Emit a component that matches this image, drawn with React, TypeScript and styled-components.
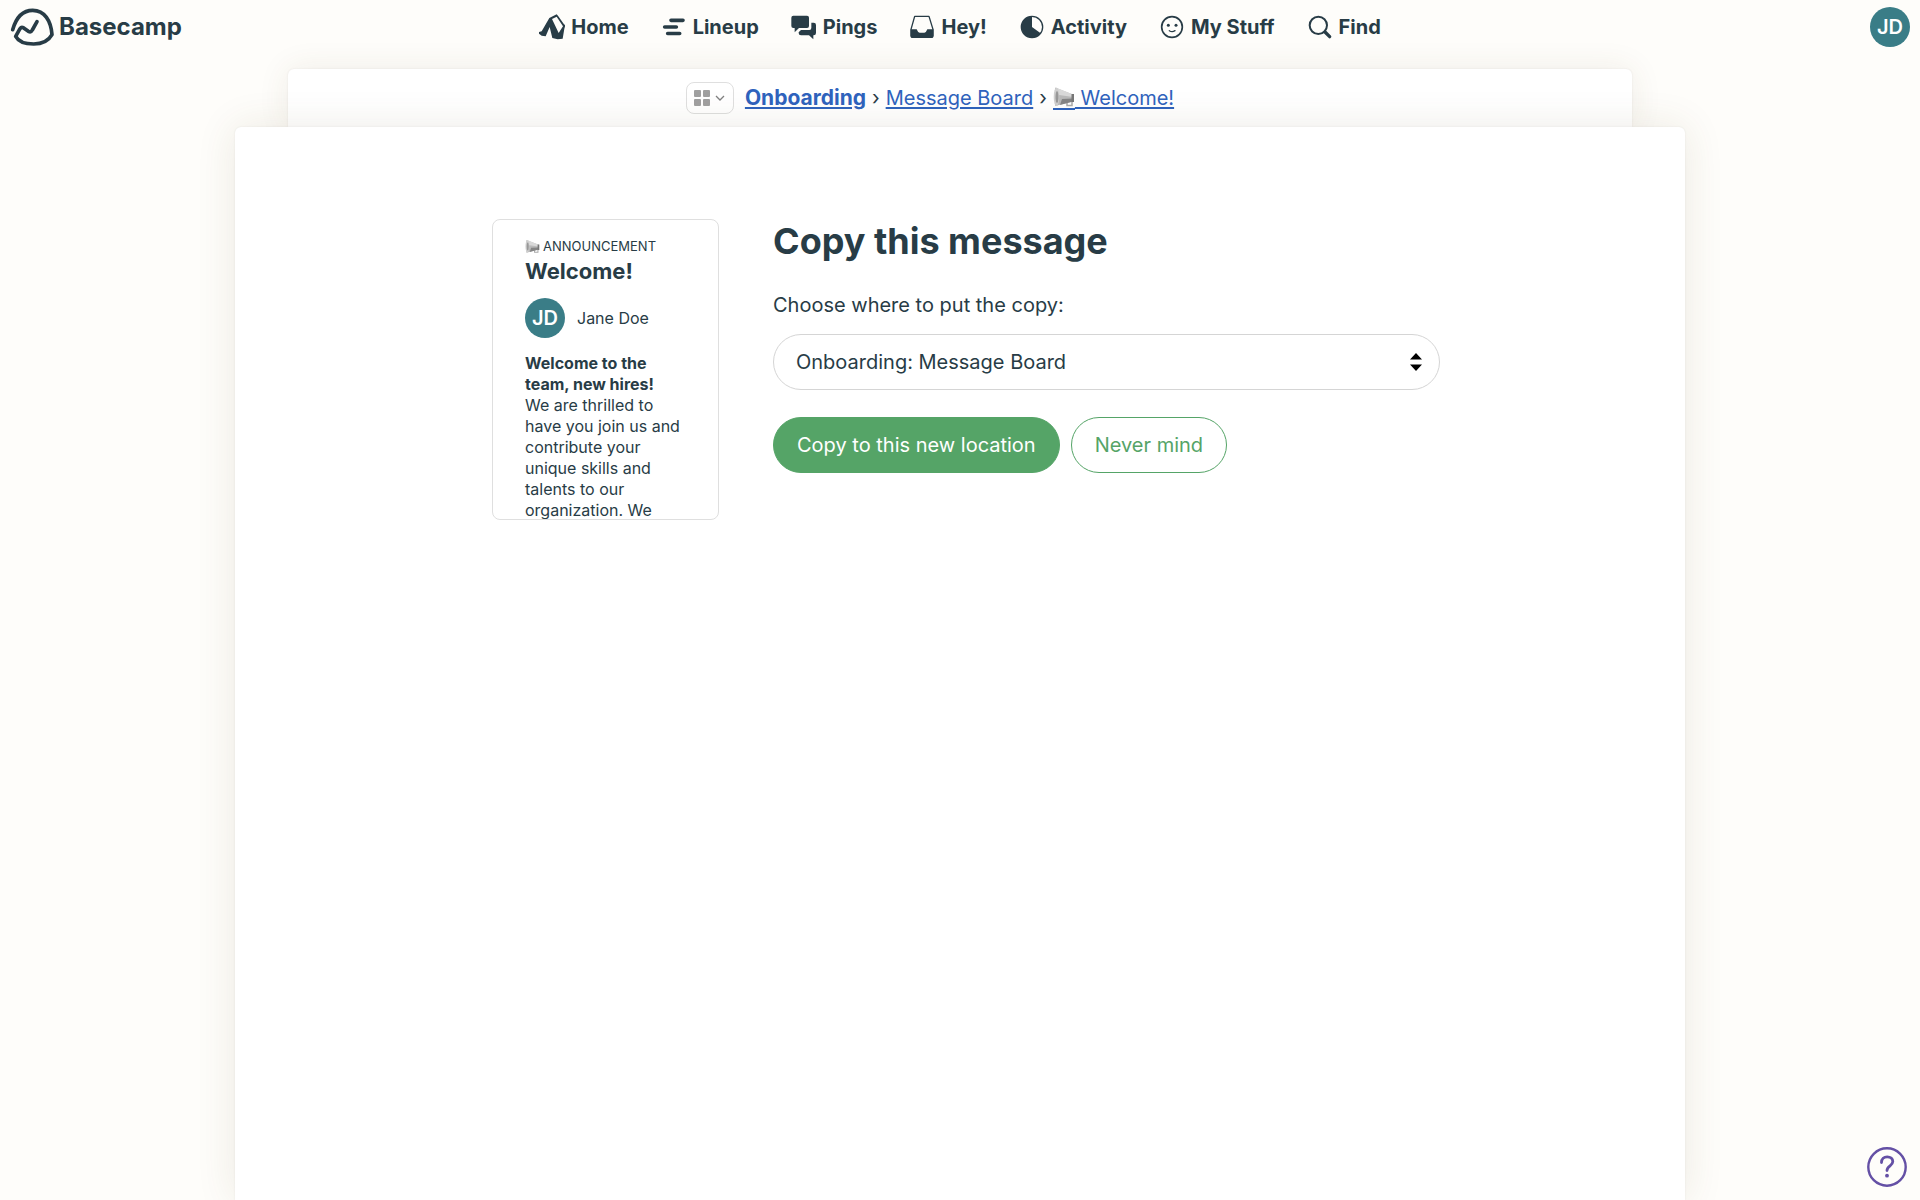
import React from "react";
import styled, { createGlobalStyle } from "styled-components";

const ink = "#283c46";
const teal = "#3a7d87";
const green = "#55a467";
const blue = "#2f63bd";

const GlobalStyle = createGlobalStyle`
  *, *::before, *::after { box-sizing: border-box; }
  html { height: 100%; }
  body {
    margin: 0;
    background: #fefdfa;
    color: ${ink};
    font-family: Inter, "Liberation Sans", sans-serif;
    font-size: 20px;
    line-height: 32px;
  }
`;

const Page = styled.div`
  display: flex;
  flex-direction: column;
  min-height: 100vh;
  overflow: hidden;
`;

const TopBar = styled.header`
  display: grid;
  grid-template-columns: 1fr auto 1fr;
  align-items: center;
  height: 53px;
  padding: 0 10px;
`;

const Brand = styled.a`
  display: flex;
  align-items: center;
  justify-self: start;
  gap: 5px;
  color: ${ink};
  font-size: 24px;
  font-weight: 700;
  text-decoration: none;
`;

const Nav = styled.nav`
  display: flex;
  gap: 32px;
`;

const NavLink = styled.a`
  display: flex;
  align-items: center;
  gap: 6px;
  color: ${ink};
  font-size: 20px;
  font-weight: 700;
  text-decoration: none;
`;

const Avatar = styled.span`
  display: inline-flex;
  flex: none;
  align-items: center;
  justify-content: center;
  width: 40px;
  height: 40px;
  border-radius: 50%;
  background: ${teal};
  color: #fff;
  font-size: 20px;
  font-weight: 600;
`;

const AccountButton = styled.button`
  justify-self: end;
  padding: 0;
  border: 0;
  border-radius: 50%;
  background: none;
  font-family: inherit;
  line-height: 0;
  cursor: pointer;
`;

const Main = styled.main`
  display: flex;
  flex: 1;
  flex-direction: column;
  align-items: center;
  padding-top: 16px;
`;

const BackSheet = styled.div`
  display: flex;
  align-items: center;
  justify-content: center;
  gap: 11px;
  width: 70%;
  height: 58px;
  border-radius: 6px 6px 0 0;
  background: #fff;
  box-shadow: 0 0 32px rgba(90, 70, 30, 0.09), 0 0 2px rgba(60, 60, 60, 0.1);
`;

const ToolsButton = styled.button`
  display: flex;
  align-items: center;
  justify-content: center;
  gap: 4px;
  width: 48px;
  height: 32px;
  padding: 0;
  border: 1px solid #dfdfdf;
  border-radius: 8px;
  background: #fff;
  cursor: pointer;
`;

const Crumbs = styled.nav`
  display: flex;
  gap: 6px;
  margin-right: 60px;
`;

const Crumb = styled.a<{ $strong?: boolean }>`
  color: ${blue};
  font-size: ${(p) => (p.$strong ? 21 : 20)}px;
  font-weight: ${(p) => (p.$strong ? 700 : 400)};
  text-decoration: underline;
  text-decoration-thickness: 2px;
  text-underline-offset: 2px;
`;

const CrumbIcon = styled.span`
  display: inline-block;
  height: 24px;
  border-bottom: 2px solid ${blue};
  line-height: 0;
  vertical-align: -3px;
`;

const Sheet = styled.section`
  display: flex;
  flex: 1;
  justify-content: center;
  position: relative;
  width: 1450px;
  max-width: 92%;
  padding-top: 92px;
  border-radius: 6px 6px 0 0;
  background: #fff;
  box-shadow: 0 0 40px rgba(90, 70, 30, 0.11), 0 0 2px rgba(60, 60, 60, 0.1);
`;

const Columns = styled.div`
  display: flex;
  align-items: flex-start;
  gap: 54px;
  width: 100%;
  max-width: 948px;
  margin-left: 12px;
`;

const Preview = styled.article`
  flex: none;
  width: 227px;
  height: 301px;
  padding: 17px 32px 0;
  border: 1px solid #dfdfdf;
  border-radius: 8px;
  overflow: hidden;
  font-size: 16px;
  line-height: 21px;
`;

const Category = styled.div`
  display: flex;
  align-items: center;
  gap: 3px;
  font-size: 13px;
  line-height: 18px;
  text-transform: uppercase;
`;

const PreviewTitle = styled.h2`
  margin: 0;
  font-size: 22px;
  font-weight: 700;
  line-height: 32px;
`;

const Author = styled.div`
  display: flex;
  align-items: center;
  gap: 12px;
  margin: 11px 0 15px;
`;

const Body = styled.p`
  margin: 0;
`;

const Form = styled.form`
  flex: 1;
  min-width: 0;
`;

const Title = styled.h1`
  margin: 0 0 26px;
  font-size: 36px;
  font-weight: 700;
  line-height: 44px;
`;

const Label = styled.label`
  display: block;
  margin-bottom: 13px;
`;

const SelectWrap = styled.div`
  position: relative;
  margin-bottom: 27px;
`;

const Select = styled.select`
  display: block;
  width: 100%;
  height: 56px;
  padding: 0 48px 0 22px;
  border: 1px solid #d5d5d5;
  border-radius: 28px;
  background: #fff;
  color: ${ink};
  font: inherit;
  appearance: none;
`;

const SelectArrows = styled.svg`
  position: absolute;
  top: 19px;
  right: 18px;
  pointer-events: none;
`;

const Actions = styled.div`
  display: flex;
  gap: 11px;
`;

const Button = styled.button<{ $filled?: boolean }>`
  height: 56px;
  padding: 0 23px;
  border: 1px solid ${green};
  border-radius: 28px;
  background: ${(p) => (p.$filled ? green : "#fff")};
  color: ${(p) => (p.$filled ? "#fff" : green)};
  font: inherit;
  cursor: pointer;
`;

const HelpButton = styled.button`
  position: fixed;
  right: 13px;
  bottom: 13px;
  width: 40px;
  height: 40px;
  padding: 0;
  border: 0;
  background: none;
  line-height: 0;
  cursor: pointer;
`;

const Logo = () => (
  <svg width="44" height="40" viewBox="30 19 132 120" fill="none" stroke={ink} strokeWidth="11" strokeLinecap="round" strokeLinejoin="round" aria-hidden="true">
    <path d="M38 87C48 52 68 29 98 29c36 0 55 32 58 73-10 18-28 28-55 28-26 0-46-8-54-23l13-23q4-6 10-3l15 11q8 4 12-4l14-25" />
  </svg>
);

const Megaphone = ({ size }: { size: number }) => (
  <svg width={size} height={size} viewBox="0 0 22 22" aria-hidden="true">
    <path d="M14 14v5.500h5V13" fill="none" stroke="#aaa" strokeWidth="1.500" />
    <path d="M2 1.500 20 8.500v7L2 20Z" fill="#b9b9b9" />
    <path d="M4 2 20 8.500v2.500L6 9Z" fill="#d9d9d9" />
    <path d="M9 13 20 12.500v3L7 19Z" fill="#858585" />
    <ellipse cx="3.500" cy="10.800" rx="2.800" ry="9.300" fill="#cfcfcf" />
    <ellipse cx="4" cy="11" rx="1.500" ry="6" fill="#999" />
    <path d="M18.500 8h2.500v8h-2.500z" fill="#777" />
  </svg>
);

const icons: Record<string, React.ReactNode> = {
  Home: (
    <svg width="26" height="26" viewBox="30 41 78 78" aria-hidden="true">
      <path fill={ink} fillRule="evenodd" d="M61 53 83 42 88 48 105 72 109 75 106 85 101 115 86 117 70 113 62 80 50 108 38 106 30 100V95L38 93ZM69 56 89 98 102 78 83 49Z" />
    </svg>
  ),
  Lineup: (
    <svg width="26" height="26" viewBox="396 41 78 78" fill="none" stroke={ink} strokeWidth="11" strokeLinecap="round" aria-hidden="true">
      <path d="M426 60h36M407 80h35M416 99.500h36" />
    </svg>
  ),
  Pings: (
    <svg width="26" height="26" viewBox="786 41 78 78" fill={ink} aria-hidden="true">
      <path d="M793 46h41q6 0 6 6v25q0 6-6 6h-24l-13 13V83h-4q-6 0-6-6V52q0-6 6-6Z" />
      <path d="M847 67h7q7 0 7 7v24q0 7-7 7h-1v12l-13-12h-24q-7 0-7-7v-2l7-7h25q6 0 6-6Z" />
    </svg>
  ),
  "Hey!": (
    <svg width="26" height="26" viewBox="61 41 78 78" aria-hidden="true">
      <path d="M78 48h43l12 39v19q0 5-5 5H72q-5 0-5-5V87Z" fill="none" stroke={ink} strokeWidth="4" strokeLinejoin="round" />
      <path d="M66 87h18q3 9 9 10h14q6-1 9-10h18v21q0 5-5 5H71q-5 0-5-5Z" fill={ink} />
    </svg>
  ),
  Activity: (
    <svg width="26" height="26" viewBox="389 41 78 78" aria-hidden="true">
      <circle cx="428" cy="80" r="32" fill="none" stroke={ink} strokeWidth="4" />
      <path d="M428 80V48a32 32 0 1 0 26 51Z" fill={ink} />
    </svg>
  ),
  "My Stuff": (
    <svg width="26" height="26" viewBox="804 41 78 78" fill="none" stroke={ink} strokeWidth="5" strokeLinecap="round" aria-hidden="true">
      <circle cx="843" cy="80" r="31" />
      <circle cx="832" cy="75" r="4.500" fill={ink} stroke="none" />
      <circle cx="855" cy="75" r="4.500" fill={ink} stroke="none" />
      <path d="M835 91q8 6 17 0" strokeWidth="4" />
    </svg>
  ),
  Find: (
    <svg width="26" height="26" viewBox="1249 41 78 78" fill="none" stroke={ink} strokeLinecap="round" aria-hidden="true">
      <circle cx="1283" cy="75" r="26" strokeWidth="6" />
      <path d="m1303 95 14 14" strokeWidth="10" />
    </svg>
  ),
};

export default function App() {
  return (
    <Page>
      <GlobalStyle />
      <TopBar>
        <Brand href="#">
          <Logo />
          Basecamp
        </Brand>
        <Nav aria-label="Main">
          {Object.entries(icons).map(([name, icon]) => (
            <NavLink href="#" key={name}>
              {icon}
              {name}
            </NavLink>
          ))}
        </Nav>
        <AccountButton type="button">
          <Avatar>JD</Avatar>
        </AccountButton>
      </TopBar>
      <Main>
        <BackSheet>
          <ToolsButton type="button" aria-label="Project tools">
            <svg width="16" height="16" viewBox="0 0 16 16" fill="#a0a0a0" aria-hidden="true">
              <rect width="7" height="7" rx="1" />
              <rect x="9" width="7" height="7" rx="1" />
              <rect y="9" width="7" height="7" rx="1" />
              <rect x="9" y="9" width="7" height="7" rx="1" />
            </svg>
            <svg width="12" height="12" viewBox="0 0 12 12" fill="none" stroke="#808080" strokeWidth="1.300" aria-hidden="true">
              <path d="m2 4 4 4 4-4" />
            </svg>
          </ToolsButton>
          <Crumbs aria-label="Breadcrumb">
            <Crumb href="#" $strong>Onboarding</Crumb>
            <span>›</span>
            <Crumb href="#">Message Board</Crumb>
            <span>›</span>
            <Crumb href="#">
              <CrumbIcon><Megaphone size={22} /></CrumbIcon> Welcome!
            </Crumb>
          </Crumbs>
        </BackSheet>
        <Sheet>
          <Columns>
            <Preview>
              <Category>
                <Megaphone size={15} />
                Announcement
              </Category>
              <PreviewTitle>Welcome!</PreviewTitle>
              <Author>
                <Avatar>JD</Avatar>
                Jane Doe
              </Author>
              <Body>
                <strong>Welcome to the team, new hires!</strong>
                <br />
                We are thrilled to have you join us and contribute your unique skills and talents to our organization. We
              </Body>
            </Preview>
            <Form onSubmit={(e) => e.preventDefault()}>
              <Title>Copy this message</Title>
              <Label htmlFor="destination">Choose where to put the copy:</Label>
              <SelectWrap>
                <Select id="destination">
                  <option>Onboarding: Message Board</option>
                </Select>
                <SelectArrows width="12" height="18" viewBox="0 0 12 18" aria-hidden="true">
                  <path d="M6 0 12 6.500H0ZM6 18 0 11.500h12Z" fill="#000" />
                </SelectArrows>
              </SelectWrap>
              <Actions>
                <Button type="submit" $filled>Copy to this new location</Button>
                <Button type="button">Never mind</Button>
              </Actions>
            </Form>
          </Columns>
        </Sheet>
      </Main>
      <HelpButton type="button" aria-label="Help">
        <svg width="40" height="40" viewBox="0 0 40 40" fill="none" stroke="#6450a5" aria-hidden="true">
          <circle cx="20" cy="20" r="18.700" strokeWidth="2.400" />
          <path d="M14.500 15.500c0-3.700 2.500-5.700 5.700-5.700 3.400 0 5.600 2 5.600 4.800 0 4.400-5.800 4-5.800 9" strokeWidth="2.800" strokeLinecap="round" />
          <circle cx="20" cy="28.700" r="1.900" fill="#6450a5" stroke="none" />
        </svg>
      </HelpButton>
    </Page>
  );
}
